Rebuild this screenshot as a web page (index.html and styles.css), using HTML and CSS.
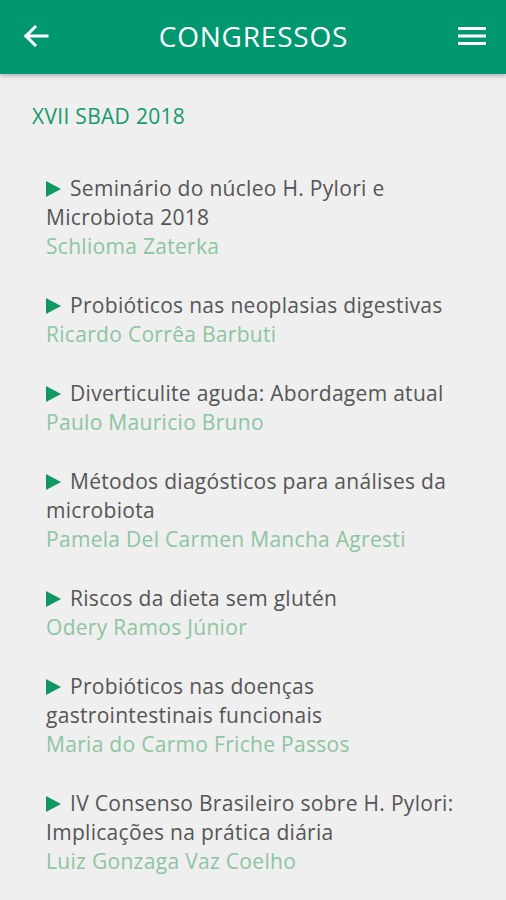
FILE: index.html
```html
<!DOCTYPE html>
<html lang="pt">
<head>
<meta charset="utf-8">
<title>Congressos</title>
<link rel="stylesheet" href="styles.css">
</head>
<body>
<header class="appbar">
  <button class="icon-btn back" aria-label="Voltar">
    <svg width="26" height="22" viewBox="0 0 26 22"><path d="M24 11H3M12 2L3 11l9 9" fill="none" stroke="#fff" stroke-width="3" stroke-linecap="square"/></svg>
  </button>
  <h1 class="title">CONGRESSOS</h1>
  <button class="icon-btn menu" aria-label="Menu">
    <svg width="28" height="18" viewBox="0 0 28 18"><rect x="0" y="0" width="28" height="3" fill="#fff"/><rect x="0" y="7.5" width="28" height="3" fill="#fff"/><rect x="0" y="15" width="28" height="3" fill="#fff"/></svg>
  </button>
</header>
<main class="content">
  <h2 class="section">XVII SBAD 2018</h2>
  <ul class="talks">
    <li class="talk"><p class="talk-title"><span class="tri"></span>Seminário do núcleo H. Pylori e Microbiota 2018</p><p class="speaker">Schlioma Zaterka</p></li>
    <li class="talk"><p class="talk-title"><span class="tri"></span>Probióticos nas neoplasias digestivas</p><p class="speaker">Ricardo Corrêa Barbuti</p></li>
    <li class="talk"><p class="talk-title"><span class="tri"></span>Diverticulite aguda: Abordagem atual</p><p class="speaker">Paulo Mauricio Bruno</p></li>
    <li class="talk"><p class="talk-title"><span class="tri"></span>Métodos diagósticos para análises da microbiota</p><p class="speaker">Pamela Del Carmen Mancha Agresti</p></li>
    <li class="talk"><p class="talk-title"><span class="tri"></span>Riscos da dieta sem glutén</p><p class="speaker">Odery Ramos Júnior</p></li>
    <li class="talk"><p class="talk-title"><span class="tri"></span>Probióticos nas doenças gastrointestinais funcionais</p><p class="speaker">Maria do Carmo Friche Passos</p></li>
    <li class="talk"><p class="talk-title"><span class="tri"></span>IV Consenso Brasileiro sobre H. Pylori: Implicações na prática diária</p><p class="speaker">Luiz Gonzaga Vaz Coelho</p></li>
  </ul>
</main>
</body>
</html>
```
FILE: styles.css
```css
* { box-sizing: border-box; }
html, body { margin: 0; padding: 0; }
body {
  background: #efefef;
  font-family: "Open Sans", "Noto Sans", sans-serif;
  width: 506px;
  height: 900px;
  overflow: hidden;
}
.appbar {
  height: 74px;
  background: #019870;
  display: flex;
  align-items: center;
  justify-content: space-between;
  padding: 0 20px 0 23px;
  box-shadow: 0 2px 4px rgba(0,0,0,0.25);
  position: relative;
}
.icon-btn {
  background: none;
  border: 0;
  padding: 0;
  display: flex;
  align-items: center;
}
.back { margin-top: -2px; }
.menu { margin-top: -3px; }
.title {
  margin: 0;
  color: #fff;
  font-weight: 400;
  font-size: 28px;
  letter-spacing: 0.8px;
  margin-top: -2px;
}
.content {
  padding: 28px 46px 0 32px;
}
.section {
  margin: 0;
  font-weight: 400;
  font-size: 21px;
  letter-spacing: 0.3px;
  line-height: 29px;
  color: #14996b;
}
.talks {
  list-style: none;
  margin: 43px 0 0 14px;
  padding: 0;
  display: flex;
  flex-direction: column;
  gap: 30px;
}
.talk p {
  margin: 0;
  font-size: 21px;
  letter-spacing: 0.3px;
  line-height: 29px;
}
.talk-title { color: #555; }
.speaker { color: #8cc5a0; }
.tri {
  display: inline-block;
  width: 0;
  height: 0;
  border-top: 8px solid transparent;
  border-bottom: 8px solid transparent;
  border-left: 15px solid #0f9862;
  margin-right: 9px;
  vertical-align: -1px;
}
```
